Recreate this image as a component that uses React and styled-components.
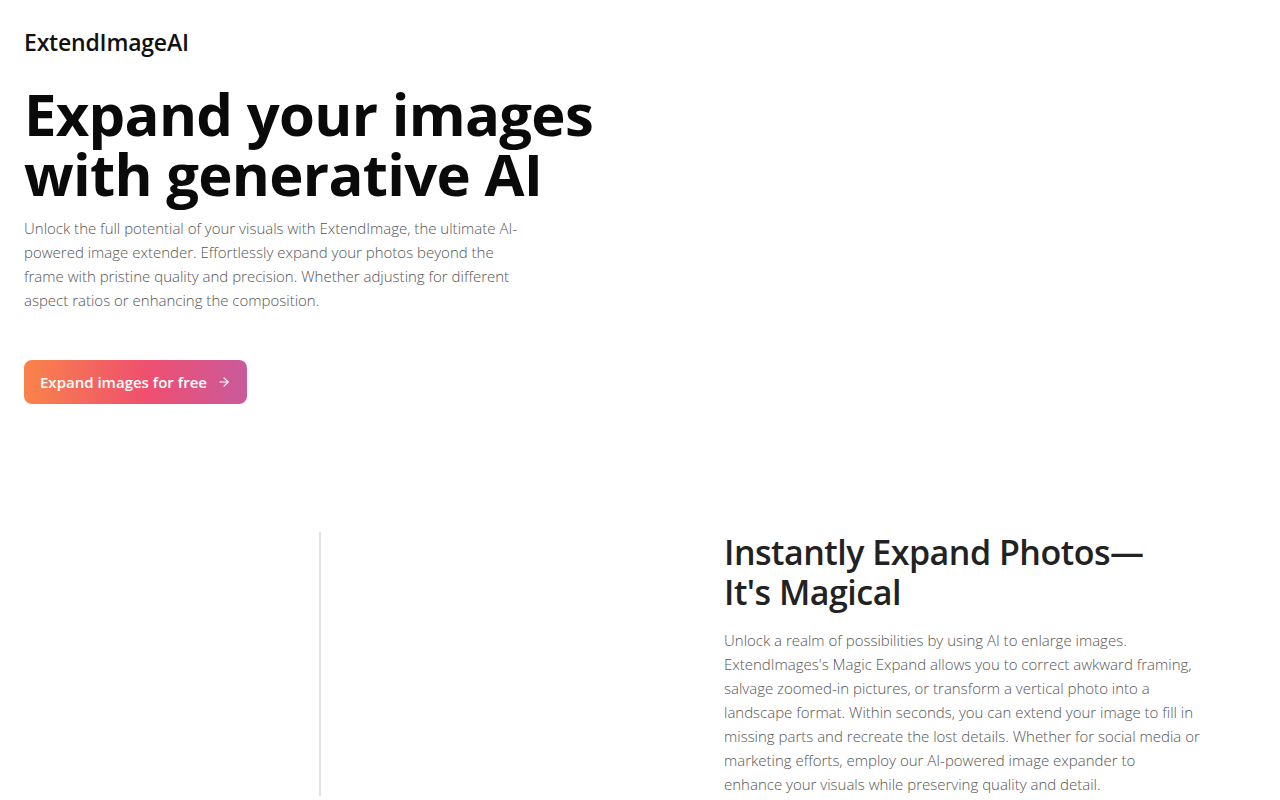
import React from 'react';
import styled, { createGlobalStyle } from 'styled-components';

const GlobalStyle = createGlobalStyle`
  html, body {
    margin: 0;
    padding: 0;
    background: #ffffff;
  }
  body {
    font-family: "Open Sans", "Noto Sans", sans-serif;
    color: #111;
  }
  * {
    box-sizing: border-box;
  }
`;

const Page = styled.div`
  width: 1280px;
  height: 800px;
  overflow: hidden;
  background: #fff;
`;

const Header = styled.header`
  display: flex;
  align-items: center;
  height: 84px;
  padding: 0 24px;
`;

const Logo = styled.div`
  font-size: 23px;
  font-weight: 600;
  letter-spacing: -0.2px;
  color: #111;
`;

const Hero = styled.section`
  display: flex;
  flex-direction: column;
  align-items: flex-start;
  padding: 0 24px;
`;

const Title = styled.h1`
  margin: 0;
  font-size: 58px;
  line-height: 60px;
  font-weight: 700;
  letter-spacing: -0.7px;
  color: #0a0a0a;
`;

const Lead = styled.p`
  margin: 12px 0 0;
  max-width: 500px;
  font-size: 15px;
  line-height: 24px;
  font-weight: 300;
  color: #555;
`;

const CtaButton = styled.button`
  display: flex;
  align-items: center;
  gap: 10px;
  margin-top: 48px;
  height: 44px;
  padding: 0 16px;
  border: none;
  border-radius: 8px;
  background: linear-gradient(90deg, #f9834a 0%, #ef4f6f 55%, #c95a9c 100%);
  color: #fff;
  font-family: inherit;
  font-size: 15px;
  font-weight: 600;
  cursor: pointer;
`;

const Feature = styled.section`
  display: grid;
  grid-template-columns: 640px 1fr;
  margin-top: 128px;
`;

const Compare = styled.div`
  position: relative;
  height: 264px;
`;

const Divider = styled.div`
  position: absolute;
  left: 319px;
  top: 0;
  bottom: 0;
  width: 2px;
  background: #e2e2e2;
`;

const FeatureText = styled.div`
  padding: 0 60px 0 84px;
`;

const FeatureTitle = styled.h2`
  margin: 0;
  font-size: 34px;
  line-height: 40px;
  font-weight: 600;
  letter-spacing: -0.5px;
  color: #222;
`;

const FeatureBody = styled.p`
  margin: 16px 0 0;
  font-size: 15px;
  line-height: 24px;
  font-weight: 300;
  color: #555;
`;

const Arrow = () => (
  <svg width="14" height="14" viewBox="0 0 24 24" fill="none" stroke="currentColor" strokeWidth="2" strokeLinecap="round" strokeLinejoin="round">
    <path d="M5 12h14" />
    <path d="M12 5l7 7-7 7" />
  </svg>
);

export default function App() {
  return (
    <Page>
      <GlobalStyle />
      <Header>
        <Logo>ExtendImageAI</Logo>
      </Header>
      <Hero>
        <Title>
          Expand your images
          <br />
          with generative AI
        </Title>
        <Lead>
          Unlock the full potential of your visuals with ExtendImage, the ultimate AI-powered image extender. Effortlessly expand your photos beyond the frame with pristine quality and precision. Whether adjusting for different aspect ratios or enhancing the composition.
        </Lead>
        <CtaButton>
          Expand images for free
          <Arrow />
        </CtaButton>
      </Hero>
      <Feature>
        <Compare>
          <Divider />
        </Compare>
        <FeatureText>
          <FeatureTitle>
            Instantly Expand Photos—
            <br />
            It's Magical
          </FeatureTitle>
          <FeatureBody>
            Unlock a realm of possibilities by using AI to enlarge images. ExtendImages's Magic Expand allows you to correct awkward framing, salvage zoomed-in pictures, or transform a vertical photo into a landscape format. Within seconds, you can extend your image to fill in missing parts and recreate the lost details. Whether for social media or marketing efforts, employ our AI-powered image expander to
            <br />
            enhance your visuals while preserving quality and detail.
          </FeatureBody>
        </FeatureText>
      </Feature>
    </Page>
  );
}
